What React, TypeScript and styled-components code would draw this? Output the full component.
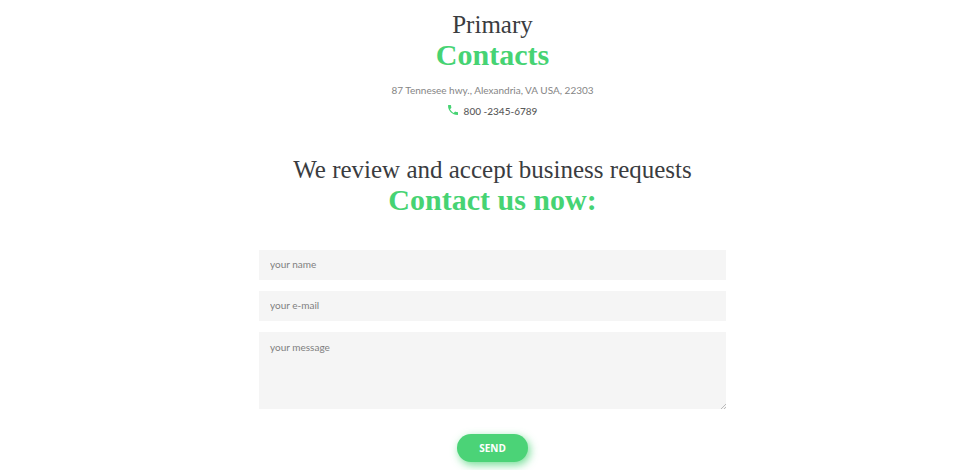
import React from "react";
import styled, { createGlobalStyle } from "styled-components";

const GlobalStyle = createGlobalStyle`
  *, *::before, *::after { box-sizing: border-box; }
  body { margin: 0; background: #fff; font-family: Lato, "Noto Sans", sans-serif; }
`;

const Page = styled.main`
  display: flex;
  flex-direction: column;
  align-items: center;
  padding: 10px 0 8px 5px;
  overflow: hidden;
`;

const Heading = styled.h2`
  margin: 0;
  display: flex;
  flex-direction: column;
  align-items: center;
  font-family: "Liberation Serif", serif;
  font-weight: 400;
  font-size: 25px;
  line-height: 30px;
  color: #3a3c40;
`;

const Accent = styled.strong`
  font-weight: 700;
  font-size: 30px;
  color: #46d373;
`;

const ContactInfo = styled.address`
  display: flex;
  flex-direction: column;
  align-items: center;
  margin: 10px 0 33px;
  font-style: normal;
  font-size: 10px;
  line-height: 21px;
  color: #858585;
`;

const Phone = styled.a`
  display: flex;
  align-items: center;
  gap: 6px;
  font-weight: 500;
  color: #5c5c5c;
  text-decoration: none;

  svg { margin-bottom: 3px; }
`;

const Form = styled.form`
  width: 100%;
  max-width: 467px;
  margin-top: 35px;
  display: flex;
  flex-direction: column;
  align-items: center;
  gap: 11px;
`;

const Field = styled.input`
  display: block;
  width: 100%;
  height: 30px;
  padding: 0 11px 2px;
  border: 0;
  border-radius: 0;
  background: #f5f5f5;
  font: 10px/14px Lato, "Noto Sans", sans-serif;
  color: #555;
  &::placeholder { color: #808080; opacity: 1; }
`;

const Message = styled(Field)`
  height: 77px;
  padding: 8px 11px;
  resize: vertical;

  &::-webkit-resizer {
    background: linear-gradient(135deg, transparent 50%, #bbb 50% 65%, transparent 65% 75%, #bbb 75% 90%, transparent 90%)
      right bottom / 6px 6px no-repeat;
  }
`;

const SendButton = styled.button`
  margin-top: 14px;
  height: 28px;
  padding: 0 22px;
  border: 0;
  border-radius: 14px;
  background: #4bd377;
  box-shadow: 2px 3px 8px rgba(70, 211, 115, 0.75);
  font: 700 10px/14px "Open Sans", sans-serif;
  color: #fff;
  cursor: pointer;
`;

function PhoneIcon() {
  return (
    <svg width="10" height="10" viewBox="3 3 18 18" fill="#46d373" aria-hidden="true">
      <path d="M6.62 10.79c1.44 2.83 3.76 5.14 6.59 6.59l2.2-2.2c.27-.27.67-.36 1.02-.24 1.12.37 2.33.57 3.57.57.55 0 1 .45 1 1V20c0 .55-.45 1-1 1C10.61 21 3 13.39 3 4c0-.55.45-1 1-1h3.5c.55 0 1 .45 1 1 0 1.25.2 2.45.57 3.57.11.35.03.74-.25 1.02l-2.2 2.2z" />
    </svg>
  );
}

export default function App() {
  return (
    <>
      <GlobalStyle />
      <Page>
        <Heading>
          <span>Primary</span>
          <Accent>Contacts</Accent>
        </Heading>
        <ContactInfo>
          <span>87 Tennesee hwy., Alexandria, VA USA, 22303</span>
          <Phone href="tel:80023456789">
            <PhoneIcon />
            800 -2345-6789
          </Phone>
        </ContactInfo>
        <Heading>
          <span>We review and accept business requests</span>
          <Accent>Contact us now:</Accent>
        </Heading>
        <Form onSubmit={(e) => e.preventDefault()}>
          <Field type="text" name="name" aria-label="your name" placeholder="your name" />
          <Field type="email" name="email" aria-label="your e-mail" placeholder="your e-mail" />
          <Message as="textarea" name="message" aria-label="your message" placeholder="your message" />
          <SendButton type="submit">SEND</SendButton>
        </Form>
      </Page>
    </>
  );
}
